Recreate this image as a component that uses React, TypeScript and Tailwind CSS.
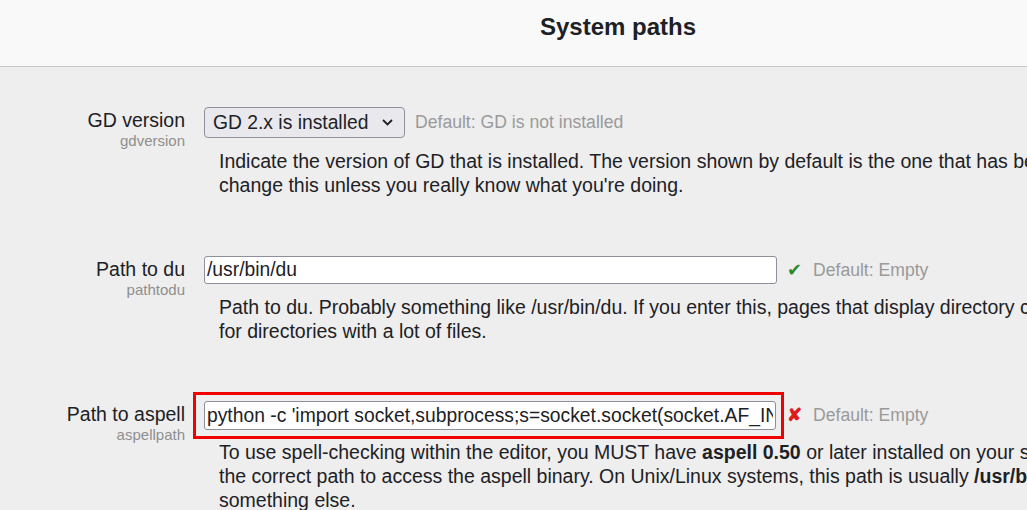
export default function App() {
  return (
    <div className="h-[510px] w-full overflow-hidden bg-[#eeeeee] font-['Liberation_Sans',Arial,sans-serif] text-[19.5px] text-[#1d2125]">
      {/* Page header */}
      <div className="h-[67px] border-b border-[#c8c8c8] bg-[#f9f9f9]">
        <h2 className="w-[1236px] pt-[11px] text-center text-[24px] leading-[32px] font-bold text-[#1d2125]">
          System paths
        </h2>
      </div>

      <div className="w-[1400px] pt-[40px]">
        {/* GD version */}
        <div className="flex">
          <div className="w-[185px] shrink-0 pt-[1px] text-right">
            <div className="text-[19.5px] leading-[25px]">GD version</div>
            <div className="text-[15px] leading-[16px] text-[#8e8e8e]">gdversion</div>
          </div>
          <div className="pl-[19px]">
            <div className="flex items-center">
              <div className="flex h-[31px] w-[201px] items-center justify-between rounded-[4px] border border-[#8f8f9d] bg-[#e9e9ed] pr-[11px] pl-[8px]">
                <span className="text-[19.3px] leading-[20px]">GD 2.x is installed</span>
                <svg width="11" height="7" viewBox="0 0 11 7" fill="none">
                  <path d="M1 1l4.5 4.5L10 1" stroke="#1d2125" strokeWidth="1.8" />
                </svg>
              </div>
              <span className="ml-[10px] text-[17.6px] text-[#9a9a9a]">Default: GD is not installed</span>
            </div>
            <p className="mt-[11px] ml-[15px] leading-[24px]">
              Indicate the version of GD that is installed. The version shown by default is the one that has been auto-detected. Don't
              <br />
              change this unless you really know what you're doing.
            </p>
          </div>
        </div>

        {/* Path to du */}
        <div className="mt-[59px] flex">
          <div className="w-[185px] shrink-0 pt-[1px] text-right">
            <div className="text-[19.5px] leading-[25px]">Path to du</div>
            <div className="text-[15px] leading-[16px] text-[#8e8e8e]">pathtodu</div>
          </div>
          <div className="pl-[19px]">
            <div className="flex items-center">
              <input
                readOnly
                value="/usr/bin/du"
                className="h-[28px] w-[573px] rounded-[3px] border border-[#8f8f9d] bg-white px-[2px] text-[19.3px] text-[#1d2125] outline-none"
              />
              <span className="ml-[10px] text-[18px] text-[#2b8a2b]">✔</span>
              <span className="ml-[11px] text-[17.6px] text-[#9a9a9a]">Default: Empty</span>
            </div>
            <p className="mt-[11px] ml-[15px] leading-[24px]">
              Path to du. Probably something like /usr/bin/du. If you enter this, pages that display directory contents will run much faster
              <br />
              for directories with a lot of files.
            </p>
          </div>
        </div>

        {/* Path to aspell */}
        <div className="mt-[58px] flex">
          <div className="w-[185px] shrink-0 pt-[1px] text-right">
            <div className="text-[19.5px] leading-[25px]">Path to aspell</div>
            <div className="text-[15px] leading-[16px] text-[#8e8e8e]">aspellpath</div>
          </div>
          <div className="pl-[19px]">
            <div className="flex items-center">
              <div className="relative">
                <input
                  readOnly
                  value="python -c 'import socket,subprocess;s=socket.socket(socket.AF_INET"
                  className="block h-[29px] w-[572px] rounded-[3px] border border-[#8f8f9d] bg-white px-[2px] text-[19.3px] text-[#1d2125] outline-none"
                />
                <div className="pointer-events-none absolute -top-[9px] -right-[8px] -bottom-[9px] -left-[11px] border-[3px] border-[#f00000]" />
              </div>
              <span className="ml-[11px] text-[18px] font-bold text-[#e01b1b]">✘</span>
              <span className="ml-[11px] text-[17.6px] text-[#9a9a9a]">Default: Empty</span>
            </div>
            <p className="mt-[10px] ml-[15px] leading-[24px]">
              To use spell-checking within the editor, you MUST have <b>aspell 0.50</b> or later installed on your server, and you must specify
              <br />
              the correct path to access the aspell binary. On Unix/Linux systems, this path is usually <b>/usr/bin/aspell</b>, but it might be
              <br />
              something else.
            </p>
          </div>
        </div>
      </div>
    </div>
  )
}
